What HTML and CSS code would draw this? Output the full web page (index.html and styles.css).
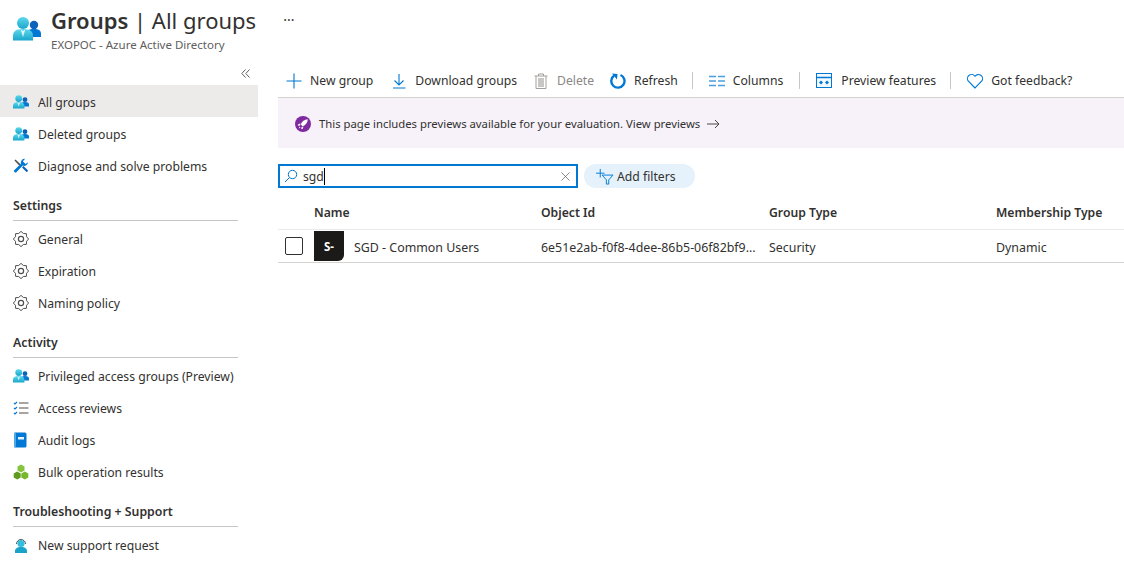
FILE: index.html
```html
<!DOCTYPE html>
<html lang="en">
<head>
<meta charset="utf-8">
<title>Groups | All groups</title>
<link rel="stylesheet" href="styles.css">
</head>
<body>
<svg class="defs" width="0" height="0" aria-hidden="true">
  <defs>
    <linearGradient id="teal" x1="0" y1="0" x2="0" y2="1">
      <stop offset="0" stop-color="#5ed8ee"/>
      <stop offset="1" stop-color="#1ba6cb"/>
    </linearGradient>
    <symbol id="people" viewBox="0 0 28 24">
      <circle cx="21" cy="8" r="4.200" fill="#0a63b8"/>
      <path d="M13 20v-3c0-3.500 3-5 8-5s7 1.500 7 5v3z" fill="#0078d4"/>
      <circle cx="10" cy="6" r="6" fill="url(#teal)"/>
      <path d="M0 23.500v-5c0-4.500 4-6.500 10-6.500s10 2 10 6.500v5z" fill="url(#teal)"/>
      <path d="M7.500 12l2.500 2 2.500-2-2.500 8z" fill="#d8f6fc"/>
    </symbol>
    <symbol id="gear" viewBox="0 0 16 16">
      <polygon points="15.600,8 13.540,10.300 13.370,13.370 10.300,13.540 8,15.600 5.700,13.540 2.630,13.370 2.460,10.300 .4,8 2.460,5.700 2.630,2.630 5.700,2.460 8,.4 10.300,2.460 13.370,2.630 13.540,5.700" fill="none" stroke="#505050" stroke-width="1"/>
      <circle cx="8" cy="8" r="2.600" fill="none" stroke="#505050" stroke-width="1.200"/>
    </symbol>
  </defs>
</svg>

<div class="page">
  <header class="blade-head">
    <svg class="head-icon"><use href="#people"/></svg>
    <div class="head-text">
      <h1 class="title"><b>Groups</b> | All groups</h1>
      <div class="subtitle">EXOPOC - Azure Active Directory</div>
    </div>
    <div class="more">···</div>
  </header>

  <div class="body">
    <nav class="side">
      <div class="collapse">
        <svg width="9" height="9" viewBox="0 0 9 9"><path d="M4.500.5L.8 4.500l3.700 4M8.500.5L4.800 4.500l3.700 4" fill="none" stroke="#605e5c"/></svg>
      </div>
      <a class="item active"><svg class="ic"><use href="#people"/></svg>All groups</a>
      <a class="item"><svg class="ic"><use href="#people"/></svg>Deleted groups</a>
      <a class="item">
        <svg class="ic" viewBox="0 0 16 16"><path d="M1.500 2.500L2.500 1.500l5 4.800-1.300 1.300z" fill="#505050"/><path d="M15 4.200a3.800 3.800 0 0 1-5.200 3.400L3.600 14a1.500 1.500 0 0 1-2.200-2.100l6.500-6.200A3.800 3.800 0 0 1 12 .9L9.800 3.200l2.800 2.800z" fill="#0078d4"/><path d="M9 9.500l1.500-1.500 4.300 4.300a1.100 1.100 0 0 1-1.500 1.500z" fill="#0a63b8"/></svg>
        Diagnose and solve problems</a>

      <h2 class="group">Settings</h2>
      <a class="item"><svg class="ic"><use href="#gear"/></svg>General</a>
      <a class="item"><svg class="ic"><use href="#gear"/></svg>Expiration</a>
      <a class="item"><svg class="ic"><use href="#gear"/></svg>Naming policy</a>

      <h2 class="group">Activity</h2>
      <a class="item"><svg class="ic"><use href="#people"/></svg>Privileged access groups (Preview)</a>
      <a class="item">
        <svg class="ic" viewBox="0 0 16 16"><path d="M1 3l1 1 2-2M1 8l1 1 2-2M1 13l1 1 2-2" fill="none" stroke="#0078d4" stroke-width="1.100"/><path d="M6 3h9.500M6 8h9.500M6 13h9.500" stroke="#8a8886" stroke-width="1.300"/></svg>
        Access reviews</a>
      <a class="item">
        <svg class="ic" viewBox="0 0 16 16"><rect x="1" y=".5" width="12.500" height="15" rx="1.500" fill="#0078d4"/><rect x="1" y=".5" width="2" height="15" rx="1" fill="#50a8e8"/><rect x="5" y="5" width="6" height="2.500" fill="#e8f3fc"/></svg>
        Audit logs</a>
      <a class="item">
        <svg class="ic" viewBox="0 0 16 16"><path d="M8 .5l3.500 2v4L8 8.500l-3.500-2v-4z" fill="#86c440"/><path d="M4.200 7.500l3.500 2v4l-3.500 2-3.500-2v-4z" fill="#5e9c20"/><path d="M11.800 7.500l3.500 2v4l-3.500 2-3.500-2v-4z" fill="#76b82a"/></svg>
        Bulk operation results</a>

      <h2 class="group">Troubleshooting + Support</h2>
      <a class="item">
        <svg class="ic" viewBox="0 0 16 16"><path d="M3.500 7a4.500 4.500 0 0 1 9 0" fill="none" stroke="#505050"/><circle cx="8" cy="6.500" r="3.600" fill="#32bedd"/><path d="M2 16v-2c0-2.500 2.500-4 6-4s6 1.500 6 4v2z" fill="#1aa3c9"/></svg>
        New support request</a>
    </nav>

    <main class="main">
      <div class="toolbar">
        <button class="cmd cmd-new">
          <svg class="cmd-ic" viewBox="0 0 16 16"><path d="M8 .5v15M.5 8h15" stroke="#0078d4" stroke-width="1.100"/></svg>New group</button>
        <button class="cmd cmd-dl">
          <svg class="cmd-ic" viewBox="0 0 16 16"><path d="M8 1v10.500M3.500 7.500L8 12l4.500-4.500M2 15h12.500" fill="none" stroke="#0078d4" stroke-width="1.100"/></svg>Download groups</button>
        <button class="cmd cmd-del">
          <svg class="cmd-ic" viewBox="0 0 16 16"><path d="M1.500 3h13M5.500 3V1h5v2M3 3v12.500h10V3" fill="none" stroke="#a19f9d"/><rect x="5" y="5" width="6" height="9" fill="#c8c6c4"/></svg>Delete</button>
        <button class="cmd cmd-ref">
          <svg class="cmd-ic" viewBox="0 0 16 16"><path d="M10.500 2a6.600 6.600 0 1 1-6.300.6" fill="none" stroke="#0078d4" stroke-width="2.400"/><path d="M2 .5l5.500.5-.5 5.500z" fill="#0078d4"/></svg>Refresh</button>
        <span class="sep"></span>
        <button class="cmd cmd-col">
          <svg class="cmd-ic" viewBox="0 0 16 16"><path d="M0 3.500h7M0 8h7M0 12.500h7M9 3.500h7M9 8h7M9 12.500h7" stroke="#4a9fe0" stroke-width="1.600"/></svg>Columns</button>
        <span class="sep"></span>
        <button class="cmd cmd-pre">
          <svg class="cmd-ic" viewBox="0 0 16 16"><rect x=".5" y=".5" width="15" height="14" fill="#f3f9fd" stroke="#0078d4"/><path d="M.5 4.500h15" stroke="#0078d4" stroke-width="1.500"/><path d="M5 7.500L7 9.500 5 11.500 3 9.500zM11 7.500L13 9.500 11 11.500 9 9.500z" fill="#0078d4"/></svg>Preview features</button>
        <span class="sep"></span>
        <button class="cmd cmd-fb">
          <svg class="cmd-ic" viewBox="0 0 16 16"><path d="M8 15L1.200 8A4.100 4.100 0 0 1 8 3.300 4.100 4.100 0 0 1 14.800 8z" fill="none" stroke="#0078d4" stroke-width="1.100"/></svg>Got feedback?</button>
      </div>

      <div class="banner">
        <svg class="rocket" viewBox="0 0 16 16"><circle cx="8" cy="8" r="8" fill="#7f2a9e"/><path d="M12.800 3.200c-3.500.2-5.800 2-7 5.200l1.800 1.800c3.200-1.200 5-3.500 5.200-7zM5.500 7.600l-2 .4-.8 1.800 2.400-.4zM8.400 10.500l-.4 2-1.800.8.400-2.400zM4.600 10.500l.9.900-1.800 1z" fill="#fff"/></svg>
        <span class="banner-text">This page includes previews available for your evaluation. View previews</span>
        <svg class="arrow" viewBox="0 0 13 10"><path d="M0 5h12M8 1l4 4-4 4" fill="none" stroke="#484644" stroke-width="1"/></svg>
      </div>

      <div class="filters">
        <div class="search">
          <svg class="search-ic" viewBox="0 0 14 14"><circle cx="8.500" cy="5.500" r="4.200" fill="none" stroke="#0078d4"/><path d="M5.500 8.500L1 13" stroke="#0078d4"/></svg>
          <span class="query">sgd</span><span class="caret"></span>
          <svg class="clear" viewBox="0 0 10 10"><path d="M.5.500l9 9M9.500.500l-9 9" stroke="#605e5c" stroke-width=".8"/></svg>
        </div>
        <button class="add-filter">
          <svg class="filter-ic" viewBox="0 0 20 18"><path d="M5.500 1v9M1 5.500h9" stroke="#0078d4" stroke-width="1"/><path d="M7.500 7.500h11.500l-4.500 5v4.500h-2.500v-4.500z" fill="none" stroke="#0078d4"/></svg>
          Add filters</button>
      </div>

      <div class="row head-row">
        <span></span><span>Name</span><span>Object Id</span><span>Group Type</span><span>Membership Type</span>
      </div>
      <div class="row data-row">
        <span class="check"><i class="box"></i></span>
        <span class="name"><i class="avatar">S-</i><span class="cell">SGD - Common Users</span></span>
        <span class="cell clip">6e51e2ab-f0f8-4dee-86b5-06f82bf9...</span>
        <span class="cell">Security</span>
        <span class="cell">Dynamic</span>
      </div>
    </main>
  </div>
</div>
</body>
</html>
```
FILE: styles.css
```css
* { box-sizing: border-box; }
html, body { margin: 0; height: 100%; }
body {
  font-family: "Noto Sans", "Open Sans", sans-serif;
  font-size: 12.2px;
  color: #323130;
  background: #fff;
  overflow: hidden;
}
.defs { position: absolute; }
.page { width: 1124px; height: 565px; overflow: hidden; }

.blade-head { display: flex; align-items: flex-start; height: 64px; padding: 5px 0 0 13px; }
.head-icon { width: 28px; height: 24px; margin: 12px 10px 0 0; flex: none; }
.title { margin: 0; font-size: 22px; font-weight: 400; line-height: 30px; }
.title b { font-weight: 600; }
.subtitle { font-size: 11.5px; line-height: 16px; margin-top: 2px; color: #605e5c; }
.more { margin: 5px 0 0 27px; font-size: 14px; line-height: 20px; }

.body { display: flex; }
.side { width: 258px; flex: none; }
.collapse { height: 21px; display: flex; justify-content: flex-end; align-items: flex-start; padding: 5px 8px 0 0; }
.item { display: flex; align-items: center; height: 32px; padding: 3px 0 0 13px; color: #323130; }
.item.active { background: #edebe9; }
.ic { width: 16px; height: 16px; margin: 0 9px 2px 0; flex: none; }
.group {
  margin: 0 0 1px 13px;
  height: 40px;
  padding-top: 16px;
  border-bottom: 1px solid #c8c6c4;
  width: 225px;
  font-size: 12.3px;
  font-weight: 600;
  line-height: 17px;
}

.main { flex: 1; min-width: 0; margin-left: 20px; }
.toolbar { display: flex; align-items: center; height: 34px; border-bottom: 1px solid #d6d4d2; }
.cmd {
  display: flex; align-items: center;
  border: 0; padding: 0; background: none;
  font: inherit; color: #323130;
  white-space: nowrap;
}
.cmd-ic { width: 16px; height: 16px; margin-right: 8px; flex: none; }
.cmd-new { margin-left: 8px; }
.cmd-dl { margin-left: 18px; }
.cmd-del { margin-left: 16px; color: #8a8886; }
.cmd-ref { margin: 0 -1px 0 16px; }
.cmd-col { margin: 0 1px 0 16px; }
.cmd-pre { margin: 0 -1px 0 16px; }
.cmd-pre .cmd-ic { margin-right: 9px; }
.cmd-fb { margin-left: 16px; }
.sep { width: 1px; height: 17px; background: #c8c6c4; margin-left: 15px; }

.banner { display: flex; align-items: center; height: 50px; padding: 1px 0 0 17px; background: #f7f2fa; }
.rocket { width: 16px; height: 16px; margin-right: 8px; flex: none; }
.banner-text { font-size: 11.3px; }
.arrow { width: 13px; height: 10px; margin-left: 7px; }

.filters { display: flex; align-items: center; gap: 6px; margin-top: 16px; }
.search {
  display: flex; align-items: center;
  width: 300px; height: 24px;
  border: 2px solid #0078d4;
  padding: 0 6px 0 4px;
}
.search-ic { width: 14px; height: 14px; margin-right: 5px; }
.query { line-height: 17px; }
.caret { width: 1px; height: 17px; background: #000; }
.clear { width: 9px; height: 9px; margin-left: auto; }
.add-filter {
  display: flex; align-items: center;
  width: 111px; height: 24px;
  border: 0; border-radius: 12px;
  background: #e5f1fb;
  padding: 0 0 0 11px;
  font: inherit; color: #323130;
}
.filter-ic { width: 19px; height: 17px; margin-right: 3px; }

.row {
  display: grid;
  grid-template-columns: 36px 227px 228px 227px 1fr;
  align-items: center;
  border-bottom: 1px solid #d6d4d2;
}
.head-row { height: 42px; padding-top: 7px; font-weight: 600; border-bottom-color: #edebe9; }
.data-row { height: 33px; font-size: 12.4px; }
.cell { padding-top: 2px; }
.check { display: flex; padding-left: 7px; }
.box { width: 18px; height: 18px; border: 1px solid #323130; border-radius: 2px; }
.name { display: flex; align-items: center; }
.avatar {
  display: flex; align-items: center; justify-content: center;
  width: 30px; height: 30px;
  margin-right: 10px;
  background: #1b1a19;
  border-radius: 0 0 6px 0;
  color: #fff; font-style: normal; font-weight: 700; font-size: 11.5px;
}
.clip { white-space: nowrap; overflow: hidden; }
```
